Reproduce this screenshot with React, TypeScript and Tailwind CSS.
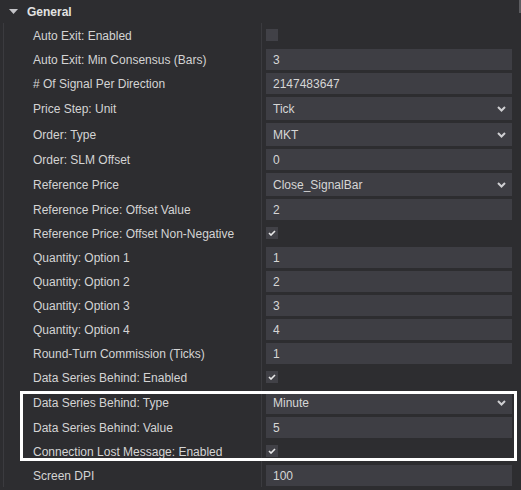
type Row =
  | { label: string; kind: "check"; checked: boolean }
  | { label: string; kind: "text"; value: string }
  | { label: string; kind: "select"; value: string }

const rows: Row[] = [
  { label: "Auto Exit: Enabled", kind: "check", checked: false },
  { label: "Auto Exit: Min Consensus (Bars)", kind: "text", value: "3" },
  { label: "# Of Signal Per Direction", kind: "text", value: "2147483647" },
  { label: "Price Step: Unit", kind: "select", value: "Tick" },
  { label: "Order: Type", kind: "select", value: "MKT" },
  { label: "Order: SLM Offset", kind: "text", value: "0" },
  { label: "Reference Price", kind: "select", value: "Close_SignalBar" },
  { label: "Reference Price: Offset Value", kind: "text", value: "2" },
  { label: "Reference Price: Offset Non-Negative", kind: "check", checked: true },
  { label: "Quantity: Option 1", kind: "text", value: "1" },
  { label: "Quantity: Option 2", kind: "text", value: "2" },
  { label: "Quantity: Option 3", kind: "text", value: "3" },
  { label: "Quantity: Option 4", kind: "text", value: "4" },
  { label: "Round-Turn Commission (Ticks)", kind: "text", value: "1" },
  { label: "Data Series Behind: Enabled", kind: "check", checked: true },
  { label: "Data Series Behind: Type", kind: "select", value: "Minute" },
  { label: "Data Series Behind: Value", kind: "text", value: "5" },
  { label: "Connection Lost Message: Enabled", kind: "check", checked: true },
  { label: "Screen DPI", kind: "text", value: "100" },
]

const Chevron = () => (
  <svg width="9" height="6" viewBox="0 0 9 6" className="shrink-0">
    <polyline points="1,1 4.5,4.5 8,1" fill="none" stroke="#cfcfd2" strokeWidth="2" />
  </svg>
)

const Check = () => (
  <svg width="8" height="6" viewBox="0 0 8 6">
    <polyline points="1,3 3,5 7,1" fill="none" stroke="#e8e8e8" strokeWidth="1.6" />
  </svg>
)

const Field = ({ row }: { row: Row }) => {
  if (row.kind === "check") {
    return (
      <div className="h-[24px] flex items-center pl-[4px]">
        <div className="w-[12px] h-[12px] bg-[#414147] flex items-center justify-center">
          {row.checked && <Check />}
        </div>
      </div>
    )
  }
  if (row.kind === "select") {
    return (
      <div className="h-[26px] pt-[2px] pl-[4px]">
        <div className="w-[246px] h-[23px] bg-[#3e3e44] flex items-center justify-between pl-[7px] pr-[6px] text-[#d6d6d6]">
          <span className="pt-[1px]">{row.value}</span>
          <Chevron />
        </div>
      </div>
    )
  }
  return (
    <div className="h-[24px] pt-[2px] pl-[4px]">
      <div className="w-[246px] h-[21px] bg-[#3e3e44] flex items-center pl-[7px] pt-[1px] text-[#d6d6d6]">
        {row.value}
      </div>
    </div>
  )
}

export default function App() {
  return (
    <div className="relative w-[521px] h-[490px] overflow-hidden bg-[#2d2d30] text-[12px] leading-none font-['Liberation_Sans',Arial,sans-serif]">
      <div className="h-[23px] flex items-center">
        <svg width="9" height="5" viewBox="0 0 9 5" className="ml-[9px]">
          <polygon points="0,0 9,0 4.5,5" fill="#c4c4c8" />
        </svg>
        <span className="ml-[9px] pt-[1px] font-bold text-[#e2e2e2]">General</span>
      </div>

      <div className="ml-[3px] border-l border-[#3b3b3f]">
        {rows.map((row) => (
          <div key={row.label} className="flex">
            <div className="w-[258px] shrink-0 border-r border-[#3b3b3f] flex items-center pl-[29px] pt-[1px] text-[#d4d4d4]">
              {row.label}
            </div>
            <div className="flex-1">
              <Field row={row} />
            </div>
          </div>
        ))}
      </div>

      <div className="absolute right-0 top-0 w-[2px] h-[13px] bg-[#5c5c60]" />
      <div className="absolute left-[20px] top-[391px] w-[497px] h-[70px] border-[3px] border-white" />
    </div>
  )
}
